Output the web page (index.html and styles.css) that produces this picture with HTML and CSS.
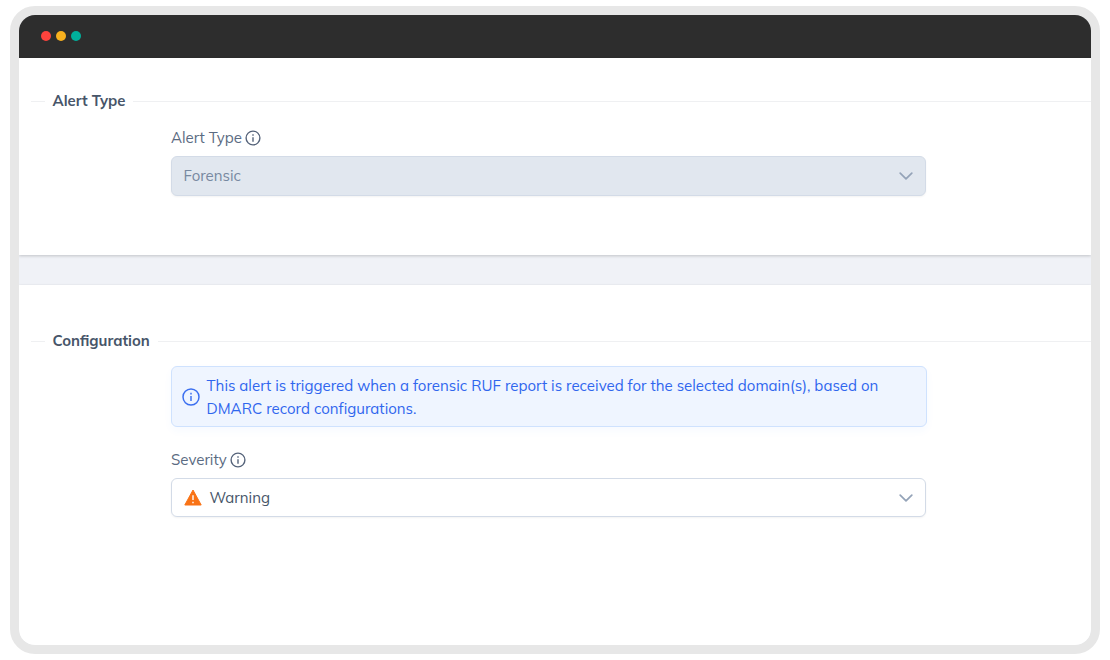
FILE: index.html
```html
<!DOCTYPE html>
<html lang="en">
  <head>
    <meta charset="UTF-8">
    <title>Alert settings</title>
    <link rel="stylesheet" href="styles.css">
  </head>
  <body>
  <div class="window">
    <div class="titlebar">
      <span class="dot red"></span>
      <span class="dot yellow"></span>
      <span class="dot green"></span>
    </div>

    <section class="panel type">
      <h2 class="legend"><span>Alert Type</span></h2>
      <div class="field">
        <div class="label"><span>Alert Type</span>
          <svg class="info" viewBox="0 0 16 16"><circle cx="8" cy="8" r="6.9"/><path d="M8 7.2V11.7"/><path d="M8 4.2V5.7"/></svg>
        </div>
        <div class="select disabled">
          <span>Forensic</span>
          <svg class="arrow" viewBox="0 0 14 8"><path d="M1.2 1.2L7 6.8L12.8 1.2"/></svg>
        </div>
      </div>
    </section>

    <section class="panel config">
      <h2 class="legend"><span>Configuration</span></h2>
      <div class="message">
        <svg class="info big" viewBox="0 0 16 16"><circle cx="8" cy="8" r="7.1"/><path d="M8 7.2V11.5"/><path d="M8 4.3V5.7"/></svg>
        <p>This alert is triggered when a forensic RUF report is received for the selected domain(s), based on<br>DMARC record configurations.</p>
      </div>
      <div class="field">
        <div class="label"><span>Severity</span>
          <svg class="info" viewBox="0 0 16 16"><circle cx="8" cy="8" r="6.9"/><path d="M8 7.2V11.7"/><path d="M8 4.2V5.7"/></svg>
        </div>
        <div class="select">
          <svg class="warn" viewBox="0 0 18 17"><path class="tri" d="M9 1L17.2 16H0.8Z"/><path class="mark" d="M9 6.2V11M9 12.7V14.2"/></svg>
          <span>Warning</span>
          <svg class="arrow" viewBox="0 0 14 8"><path d="M1.2 1.2L7 6.8L12.8 1.2"/></svg>
        </div>
      </div>
    </section>
  </div>
  </body>
</html>
```
FILE: styles.css
```css
* {box-sizing: border-box;}

body {
  margin: 0;
  padding: 6px 10px 6px 9.5px;
  background-color: white;
  font-family: Mulish, Lato, "Open Sans", sans-serif;
  font-size: 15px;
  color: #5b6b82;
}
.window {
  height: 648px;
  border: 9px solid #e7e7e7;
  border-radius: 25px;
  background-color: #f0f2f7;
  overflow: hidden;
  display: flex;
  flex-direction: column;
}
.titlebar {
  height: 43px;
  padding: 0 22.5px;
  background-color: #2d2d2d;
  display: flex;
  align-items: center;
  gap: 5px;
}
.dot {width: 10px; height: 10px; margin-bottom: 1px; border-radius: 50%;}
.red {background-color: #ff433d;}
.yellow {background-color: #f7b01e;}
.green {background-color: #00b09c;}

.panel {
  padding-left: 12px;
  background-color: white;
}
.type {
  height: 197px;
  padding-top: 33px;
  box-shadow: 0 1px 3px rgba(0, 0, 0, 0.2);
}
.config {
  flex: 1;
  margin-top: 30px;
  padding-top: 46px;
  box-shadow: 0 0 2px rgba(0, 0, 0, 0.1);
}

.legend {
  display: flex;
  align-items: center;
  gap: 8px;
  height: 20px;
  margin: 0;
  font-size: 14.9px;
  font-weight: bold;
  color: #475569;
}
.legend span {margin-top: -1px;}
.legend::before, .legend::after {
  content: "";
  height: 1px;
  margin-top: 1px;
  background-color: #eff0f2;
}
.legend::before {width: 14px;}
.legend::after {flex: 1;}

.field {width: 755px; margin-left: 140.5px;}
.type .field {margin-top: 17px;}
.config .field {margin-top: 23px;}
.label {
  display: flex;
  align-items: center;
  gap: 3.5px;
  height: 20px;
  margin-bottom: 8px;
}
.label span {margin-bottom: 1.5px;}
.info {
  width: 16px;
  height: 16px;
  flex: none;
  fill: none;
  stroke: #55637a;
  stroke-width: 1.4;
}
.big {width: 18px; height: 18px; stroke: #3b6ff0; stroke-width: 1.3;}

.select {
  display: flex;
  align-items: center;
  height: 39.4px;
  padding: 0 12px 0 11.5px;
  border: 1px solid #d3dbe7;
  border-radius: 6px;
  background-color: white;
  box-shadow: 0 1px 2px rgba(18, 18, 23, 0.05);
  color: #475569;
}
.disabled {height: 40px; background-color: #e1e7ef; color: #7788a0;}
.select span {margin-bottom: 0.6px;}
.arrow {
  width: 14px;
  height: 8px;
  margin-left: auto;
  fill: none;
  stroke: #94a3b8;
  stroke-width: 1.7;
  stroke-linecap: round;
  stroke-linejoin: round;
}
.warn {width: 18px; height: 17px; margin-right: 8px;}
.tri {fill: #f97316; stroke: #f97316; stroke-linejoin: round;}
.mark {fill: none; stroke: white; stroke-width: 1.4;}

.message {
  display: flex;
  align-items: center;
  gap: 7px;
  width: 756px;
  height: 61px;
  margin: 15px 0 0 140px;
  padding: 0 11px 0 10px;
  border: 1px solid #cfe2fe;
  border-radius: 6px;
  background-color: #eff5ff;
  box-shadow: 0 4px 8px rgba(59, 130, 246, 0.04);
  color: #2f66ee;
}
.message p {
  margin: 0;
  line-height: 23px;
  letter-spacing: 0.015px;
  white-space: nowrap;
}
```
